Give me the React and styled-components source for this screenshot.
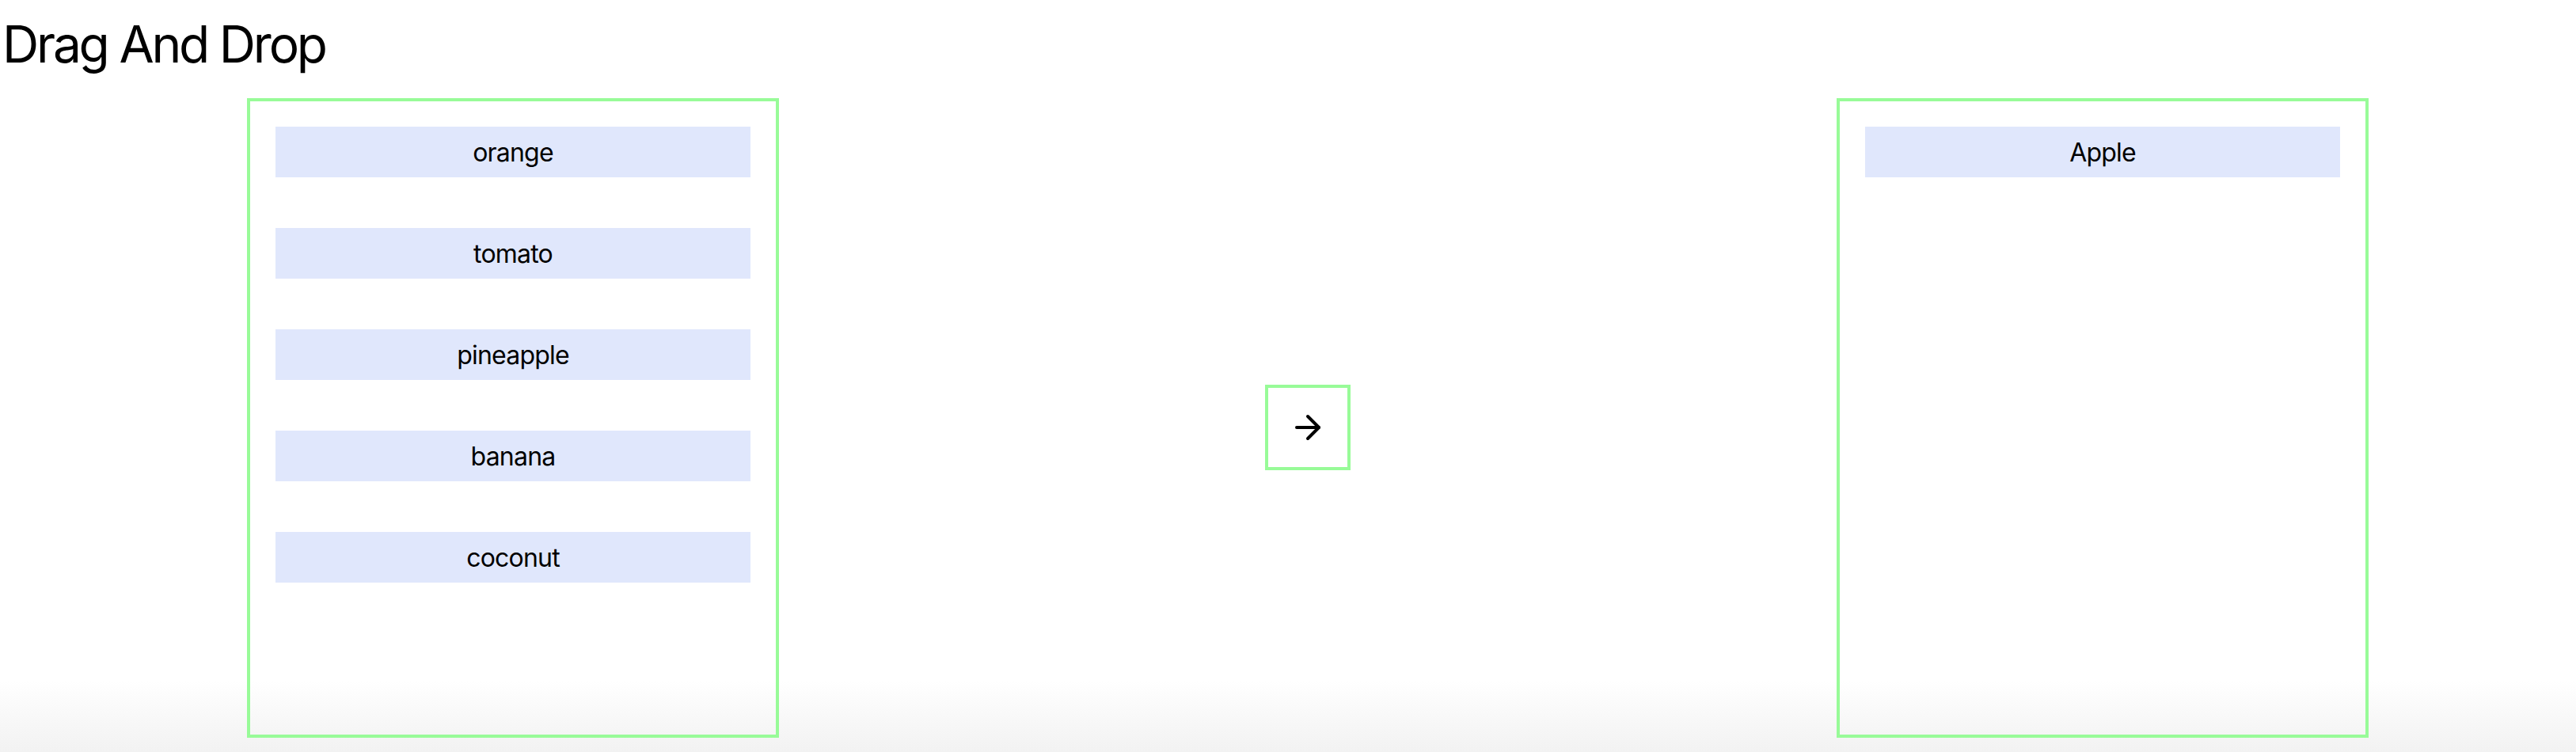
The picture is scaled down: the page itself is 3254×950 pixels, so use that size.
import React from 'react';
import styled, { createGlobalStyle } from 'styled-components';
import { ArrowRight } from 'lucide-react';

const GlobalStyle = createGlobalStyle`
  html, body {
    margin: 0;
    padding: 0;
  }
  body {
    min-height: 100vh;
    font-family: Inter, 'Noto Sans', sans-serif;
    color: #000;
    background: linear-gradient(to bottom, #fff 0, #fff 860px, #f2f2f2 950px);
  }
`;

const Page = styled.div`
  display: flex;
  flex-direction: column;
`;

const Title = styled.h1`
  margin: 0;
  padding: 17px 0 0 3px;
  font-size: 64px;
  line-height: 78px;
  font-weight: 400;
  letter-spacing: -3.2px;
`;

const Board = styled.div`
  display: flex;
  align-items: center;
  gap: 614px;
  margin-top: 29px;
  padding-left: 312px;
`;

const List = styled.div`
  width: 600px;
  height: 736px;
  padding: 32px;
  border: 4px solid palegreen;
  display: flex;
  flex-direction: column;
  gap: 64px;
`;

const Item = styled.div`
  height: 64px;
  flex-shrink: 0;
  display: flex;
  align-items: center;
  justify-content: center;
  background-color: #e0e7fc;
  font-size: 32px;
  letter-spacing: -0.8px;
`;

const MoveButton = styled.button`
  width: 108px;
  height: 108px;
  margin-top: 24px;
  padding: 0;
  flex-shrink: 0;
  display: flex;
  align-items: center;
  justify-content: center;
  background: transparent;
  border: 4px solid palegreen;
  color: #000;
  cursor: pointer;
`;

const left = ['orange', 'tomato', 'pineapple', 'banana', 'coconut'];
const right = ['Apple'];

export default function App() {
  return (
    <Page>
      <GlobalStyle />
      <Title>Drag And Drop</Title>
      <Board>
        <List>
          {left.map((name) => (
            <Item key={name}>{name}</Item>
          ))}
        </List>
        <MoveButton>
          <ArrowRight size={48} strokeWidth={2} />
        </MoveButton>
        <List>
          {right.map((name) => (
            <Item key={name}>{name}</Item>
          ))}
        </List>
      </Board>
    </Page>
  );
}
